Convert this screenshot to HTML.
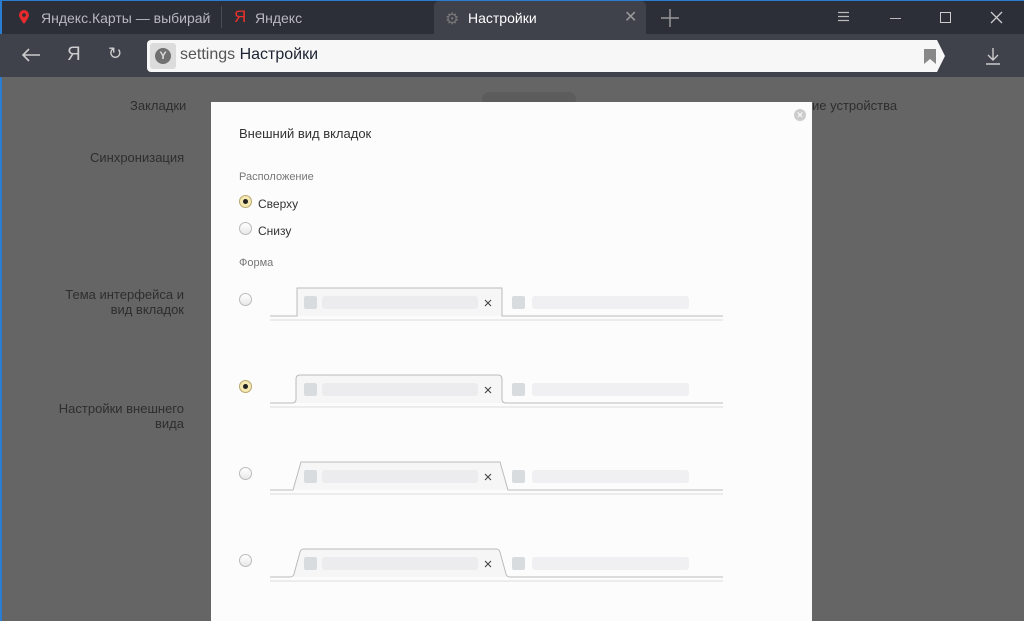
<!DOCTYPE html>
<html><head><meta charset="utf-8"><style>
*{margin:0;padding:0;box-sizing:border-box}
body{width:1024px;height:621px;overflow:hidden;background:#656565;font-family:"Liberation Sans","DejaVu Sans",sans-serif;position:relative}
.abs{position:absolute}
.tabbar{left:0;top:0;width:1024px;height:34px;background:#2c2e38;border-top:1px solid #2a7dd0}
.tool{left:0;top:34px;width:1024px;height:43px;background:#3f414b}
.t{color:#b8b9bf;font-size:14px}
.addr{left:147px;top:40px;width:790px;height:32px;background:#f7f7f7;border-radius:4px 0 0 4px}
.lbl{color:#2e2e2e;font-size:13px}
.modal{left:211px;top:102px;width:601px;height:519px;background:#fcfcfc}
.g{color:#777;font-size:11px}
.radio{width:13px;height:13px;border-radius:50%;border:1px solid #bbb;background:linear-gradient(#fff,#e8e8e8)}
.radio.on{background:#f5e8b0;border-color:#b8a870}
.radio.on::after{content:"";position:absolute;left:3px;top:3px;width:5px;height:5px;border-radius:50%;background:#222}
</style></head><body>
<div class="abs tabbar"></div>
<div class="abs" style="left:0;top:0;width:2px;height:621px;background:#2a7dd0"></div>
<svg class="abs" style="left:18px;top:9px" width="12" height="16"><path d="M6 1a5 5 0 0 0-5 5c0 3 5 9 5 9s5-6 5-9a5 5 0 0 0-5-5z" fill="#e52b2b"/><circle cx="6" cy="6" r="1.8" fill="#2c2e38"/></svg>
<div class="abs t" style="left:41px;top:10px;width:170px;overflow:hidden;white-space:nowrap">Яндекс.Карты — выбирайт</div>
<div class="abs" style="left:221px;top:6px;width:1px;height:22px;background:#4a4c55"></div>
<div class="abs" style="left:234px;top:7px;color:#e8322b;font-size:17px">Я</div>
<div class="abs t" style="left:255px;top:10px">Яндекс</div>
<div class="abs" style="left:434px;top:1px;width:212px;height:33px;background:#3f414b;border-radius:5px 5px 0 0"></div>
<div class="abs" style="left:445px;top:9px;color:#777;font-size:16px">⚙</div>
<div class="abs" style="left:468px;top:10px;color:#fff;font-size:14px">Настройки</div>
<div class="abs" style="left:624px;top:7px;color:#999;font-size:16px">✕</div>
<svg class="abs" style="left:660px;top:8px" width="20" height="20"><path d="M10 1v18M1 10h18" stroke="#999" stroke-width="1.5"/></svg>
<svg class="abs" style="left:837px;top:10px" width="14" height="14"><path d="M1 2.5h11M1 6.5h11M1 10.5h11" stroke="#bbb" stroke-width="1.2"/></svg>
<div class="abs" style="left:890px;top:18px;width:11px;height:1px;background:#bbb"></div>
<div class="abs" style="left:940px;top:12px;width:11px;height:11px;border:1.3px solid #ccc"></div>
<svg class="abs" style="left:990px;top:11px" width="13" height="13"><path d="M1 1l11 11M12 1L1 12" stroke="#ccc" stroke-width="1.3"/></svg>
<div class="abs tool"></div>
<svg class="abs" style="left:21px;top:47px" width="20" height="16"><path d="M19 8H2M8 2L2 8l6 6" stroke="#ccc" stroke-width="1.6" fill="none"/></svg>
<div class="abs" style="left:67px;top:44px;color:#ccc;font-size:19px">Я</div>
<div class="abs" style="left:108px;top:44px;color:#ccc;font-size:17px">↻</div>
<div class="abs addr"></div>
<svg class="abs" style="left:936px;top:40px" width="10" height="32"><path d="M0 0h1l8 16-8 16H0z" fill="#f7f7f7"/></svg>
<div class="abs" style="left:150px;top:43px;width:26px;height:26px;background:#dcdcdc;border-radius:3px"></div>
<div class="abs" style="left:155px;top:48px;width:16px;height:16px;border-radius:50%;background:#707070;color:#ddd;font-size:11px;text-align:center;line-height:16px;font-weight:bold">Y</div>
<div class="abs" style="left:180px;top:46px;font-size:16px;color:#555">settings <span style="color:#1d2333">Настройки</span></div>
<svg class="abs" style="left:924px;top:49px" width="12" height="15"><path d="M0 0h12v15l-6-5-6 5z" fill="#888"/></svg>
<svg class="abs" style="left:985px;top:47px" width="16" height="18"><path d="M8 1v12M3 8l5 5 5-5M1 17h14" stroke="#ccc" stroke-width="1.4" fill="none"/></svg>
<div class="abs lbl" style="left:130px;top:98px">Закладки</div>
<div class="abs" style="left:482px;top:92px;width:94px;height:14px;background:#5c5c5c;border-radius:8px"></div>
<div class="abs lbl" style="left:812px;top:98px">ие устройства</div>
<div class="abs lbl" style="left:90px;top:150px">Синхронизация</div>
<div class="abs lbl" style="left:50px;top:287px;text-align:right;width:134px">Тема интерфейса и<br>вид вкладок</div>
<div class="abs lbl" style="left:50px;top:401px;text-align:right;width:134px">Настройки внешнего<br>вида</div>
<div class="abs modal"></div>
<div class="abs" style="left:794px;top:109px;width:12px;height:12px;border-radius:50%;background:#ccc;color:#fff;font-size:9px;text-align:center;line-height:12px">✕</div>
<div class="abs" style="left:239px;top:126px;font-size:13px;color:#333">Внешний вид вкладок</div>
<div class="abs g" style="left:239px;top:171px">Расположение</div>
<div class="abs radio on" style="left:239px;top:195px"></div>
<div class="abs" style="left:258px;top:197px;font-size:12px;color:#333">Сверху</div>
<div class="abs radio" style="left:239px;top:222px"></div>
<div class="abs" style="left:258px;top:224px;font-size:12px;color:#333">Снизу</div>
<div class="abs g" style="left:239px;top:257px">Форма</div>
<div class="abs radio" style="left:239px;top:293px"></div>
<div class="abs radio on" style="left:239px;top:380px"></div>
<div class="abs radio" style="left:239px;top:467px"></div>
<div class="abs radio" style="left:239px;top:554px"></div>
<svg class="abs" style="left:270px;top:287px" width="454" height="36">
<path d="M0 29H27V1H232V29H453" stroke="#bbb" fill="#f6f6f6"/><path d="M0 33H453" stroke="#ddd"/>
<rect x="34" y="9" width="13" height="13" rx="2" fill="#d9dcdf"/><rect x="52" y="9" width="156" height="13" rx="3" fill="#ececee"/>
<path d="M215 13l6 6M221 13l-6 6" stroke="#444" stroke-width="1.1"/>
<rect x="242" y="9" width="13" height="13" rx="2" fill="#d9dcdf"/><rect x="262" y="9" width="157" height="13" rx="3" fill="#f0f0f2"/></svg>
<svg class="abs" style="left:270px;top:374px" width="454" height="36">
<path d="M0 29H22q4 0 4-4V5q0-4 4-4H228q4 0 4 4V25q0 4 4 4H453" stroke="#bbb" fill="#f6f6f6"/><path d="M0 33H453" stroke="#ddd"/>
<rect x="34" y="9" width="13" height="13" rx="2" fill="#d9dcdf"/><rect x="52" y="9" width="156" height="13" rx="3" fill="#ececee"/>
<path d="M215 13l6 6M221 13l-6 6" stroke="#444" stroke-width="1.1"/>
<rect x="242" y="9" width="13" height="13" rx="2" fill="#d9dcdf"/><rect x="262" y="9" width="157" height="13" rx="3" fill="#f0f0f2"/></svg>
<svg class="abs" style="left:270px;top:461px" width="454" height="36">
<path d="M0 29H23L31 1H230L238 29H453" stroke="#bbb" fill="#f6f6f6"/><path d="M0 33H453" stroke="#ddd"/>
<rect x="34" y="9" width="13" height="13" rx="2" fill="#d9dcdf"/><rect x="52" y="9" width="156" height="13" rx="3" fill="#ececee"/>
<path d="M215 13l6 6M221 13l-6 6" stroke="#444" stroke-width="1.1"/>
<rect x="242" y="9" width="13" height="13" rx="2" fill="#d9dcdf"/><rect x="262" y="9" width="157" height="13" rx="3" fill="#f0f0f2"/></svg>
<svg class="abs" style="left:270px;top:548px" width="454" height="36">
<path d="M0 29H20q3 0 4-3L30 4q1-3 4-3H226q3 0 4 3L236 26q1 3 4 3H453" stroke="#bbb" fill="#f6f6f6"/><path d="M0 33H453" stroke="#ddd"/>
<rect x="34" y="9" width="13" height="13" rx="2" fill="#d9dcdf"/><rect x="52" y="9" width="156" height="13" rx="3" fill="#ececee"/>
<path d="M215 13l6 6M221 13l-6 6" stroke="#444" stroke-width="1.1"/>
<rect x="242" y="9" width="13" height="13" rx="2" fill="#d9dcdf"/><rect x="262" y="9" width="157" height="13" rx="3" fill="#f0f0f2"/></svg>
</body></html>
